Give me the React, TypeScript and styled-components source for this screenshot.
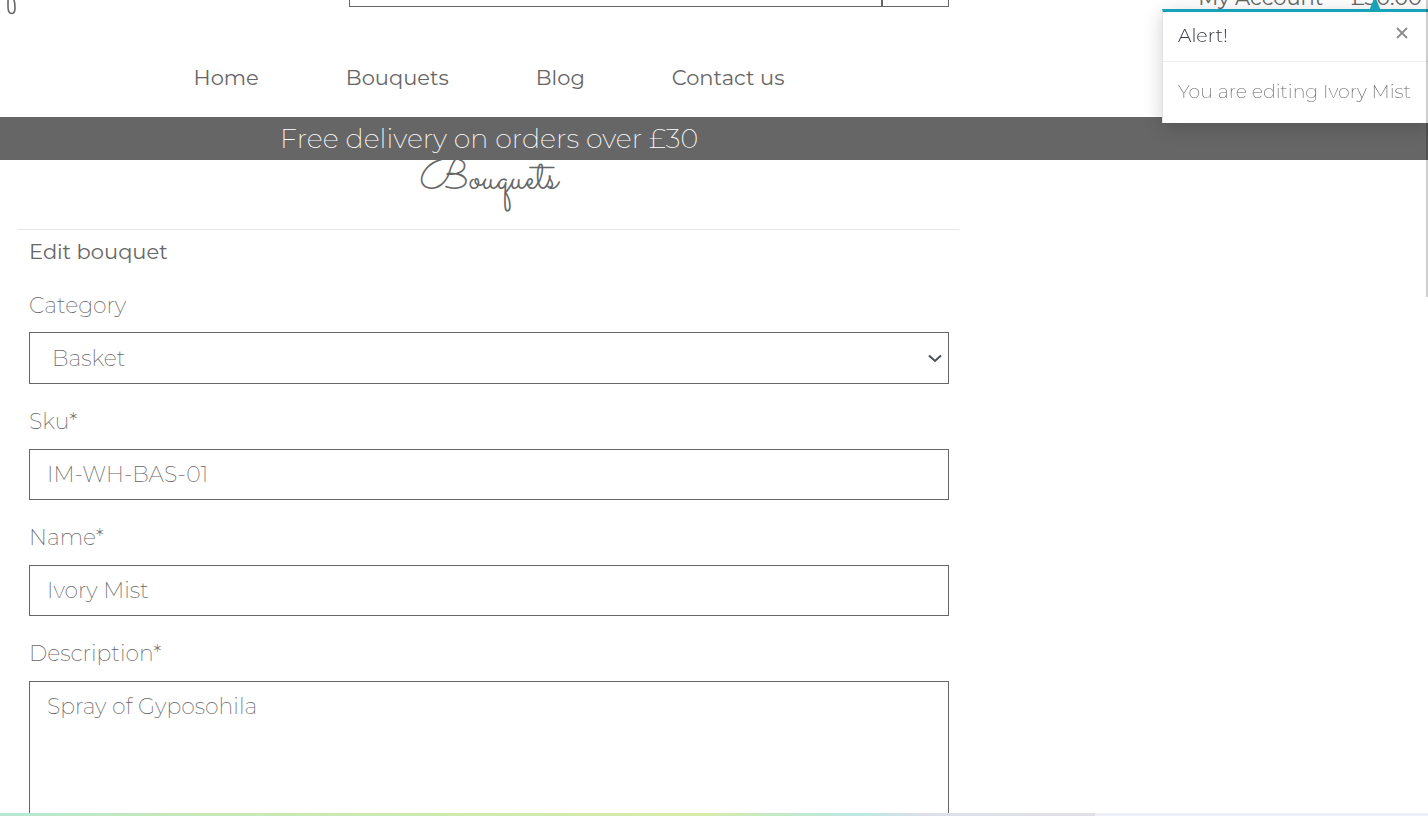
import React from "react";
import styled, { createGlobalStyle } from "styled-components";

const GlobalStyle = createGlobalStyle`
  *, *::before, *::after { box-sizing: border-box; }
  html, body { margin: 0; height: 100%; overflow: hidden; background: #fff; }
  body, input, select, textarea, button {
    font-family: Montserrat, Inter, "Open Sans", sans-serif;
    font-size: 22px;
    font-weight: 200;
    color: #666;
  }
`;

const Page = styled.div`
  height: 100vh;
  overflow: hidden;
`;

const Header = styled.header`
  margin-top: -44px;
`;

const Column = styled.div`
  width: 100%;
  max-width: 978px;
`;

const TopRow = styled.div`
  display: flex;
  justify-content: space-between;
  align-items: flex-end;
  height: 60px;
  padding-right: 6px;
`;

const Brand = styled.a`
  display: flex;
  flex: 0 0 349px;
  padding-left: 6px;
`;

const SearchForm = styled.form`
  display: flex;
  flex: 0 1 600px;
  height: 51px;
  align-self: flex-start;
`;

const SearchInput = styled.input`
  flex: 1;
  min-width: 0;
  border: 1px solid #666;
  border-radius: 0;
  background: #fff;
`;

const SearchButton = styled.button`
  width: 67px;
  border: 1px solid #666;
  background: #fff;
`;

const AccountLinks = styled.nav`
  display: flex;
  gap: 28px;
  margin-left: auto;
  align-self: flex-start;
  padding-top: 25px;
`;

const HeaderLink = styled.a`
  color: #666;
  font-size: 21px;
  font-weight: 400;
  line-height: 34px;
  text-decoration: none;
`;

const MainNav = styled(Column).attrs({ as: "nav" })`
  display: flex;
  justify-content: center;
  gap: 87px;
  height: 101px;
  padding-top: 45px;
`;

const Banner = styled.div`
  background: #666;
`;

const BannerText = styled(Column)`
  color: #fff;
  font-size: 27px;
  font-weight: 200;
  line-height: 43px;
  text-align: center;
`;

const Main = styled(Column).attrs({ as: "main" })`
  padding: 0 19px 0 18px;
`;

const Title = styled.h1`
  margin: 0;
  height: 69px;
  font-family: Sacramento, Lato, cursive;
  font-size: 43px;
  font-weight: 400;
  line-height: 40px;
  text-align: center;
`;

const EditForm = styled.form`
  padding: 5px 10px 0 11px;
  border-top: 1px solid #e5e5e5;
`;

const FormTitle = styled.h2`
  margin: 0 0 21px;
  font-size: 21px;
  font-weight: 400;
  line-height: 33px;
`;

const Field = styled.div`
  display: flex;
  flex-direction: column;
  margin-bottom: 21px;
`;

const Label = styled.label`
  margin-bottom: 10px;
  line-height: 33px;

  ${Field} + ${Field} & {
    margin-bottom: 11px;
  }
`;

const TextInput = styled.input`
  height: 51px;
  padding: 0 17px;
  border: 1px solid #666;
  border-radius: 0;
  outline: 0;
`;

const SelectWrap = styled.div`
  display: grid;
  align-items: center;
  > * { grid-area: 1 / 1; }
  > svg { justify-self: end; margin-right: 7px; pointer-events: none; }
`;

const Select = styled.select`
  width: 100%;
  height: 52px;
  padding: 0 48px 0 22px;
  border: 1px solid #666;
  border-radius: 0;
  background: #fff;
  appearance: none;
`;

const TextArea = styled.textarea`
  height: 220px;
  padding: 8px 17px;
  border: 1px solid #666;
  border-radius: 0;
  line-height: 33px;
  resize: none;
`;

const Toast = styled.section`
  position: fixed;
  top: 9px;
  right: 0;
  width: 266px;
  border-left: 1px solid #e2e2e2;
  border-top: 3px solid #17a2b8;
  background: #fff;
  box-shadow: 0 4px 18px rgba(0, 0, 0, 0.18);
`;

const ToastArrow = styled.svg`
  position: absolute;
  top: -15px;
  right: 47px;
`;

const ToastHeader = styled.div`
  display: flex;
  justify-content: space-between;
  height: 50px;
  padding: 7px 18px 0 15px;
  border-bottom: 1px solid #eee;
`;

const ToastTitle = styled.strong`
  color: #343a40;
  font-size: 19px;
  font-weight: 300;
  line-height: 33px;
`;

const CloseButton = styled.button`
  display: flex;
  align-self: flex-start;
  padding: 8px 2px;
  border: 0;
  background: none;
`;

const ToastBody = styled.p`
  margin: 0;
  height: 61px;
  padding: 13px 15px;
  font-size: 19px;
  line-height: 33px;
  white-space: nowrap;
`;

const ScrollThumb = styled.div`
  position: fixed;
  top: 0;
  right: 0;
  width: 2px;
  height: 297px;
  background: rgba(0, 0, 0, 0.2);
`;

const BottomStrip = styled.div`
  position: fixed;
  right: 0;
  bottom: 0;
  left: 0;
  height: 3px;
  background: linear-gradient(90deg, #b5e8d5 0%, #c6e8b8 12%, #cdeaae 30%, #d9eba8 49%, #c5eac4 54%, #bce8e2 60%, #dedfe8 65%, #e0dfe8 76.7%, #efeff7 76.7%);
`;

export default function App() {
  return (
    <Page>
      <GlobalStyle />
      <Header>
        <TopRow>
          <Brand href="#" aria-label="Shop home">
            <svg width="12" height="36" viewBox="0 0 12 36" fill="none" stroke="#666" strokeWidth="1.6">
              <path d="M2 0V26Q2 33.500 5.500 33.500Q9 33.500 9 28Q9 22 7 16" />
            </svg>
          </Brand>
          <SearchForm>
            <SearchInput aria-label="Search" />
            <SearchButton type="button" aria-label="Submit search" />
          </SearchForm>
          <AccountLinks>
            <HeaderLink href="#">My Account</HeaderLink>
            <HeaderLink href="#">£30.00</HeaderLink>
          </AccountLinks>
        </TopRow>
        <MainNav>
          <HeaderLink href="#">Home</HeaderLink>
          <HeaderLink href="#">Bouquets</HeaderLink>
          <HeaderLink href="#">Blog</HeaderLink>
          <HeaderLink href="#">Contact us</HeaderLink>
        </MainNav>
      </Header>
      <Banner>
        <BannerText>Free delivery on orders over £30</BannerText>
      </Banner>
      <Main>
        <Title>Bouquets</Title>
        <EditForm>
          <FormTitle>Edit bouquet</FormTitle>
          <Field>
            <Label htmlFor="category">Category</Label>
            <SelectWrap>
              <Select id="category" defaultValue="Basket">
                <option>Basket</option>
              </Select>
              <svg width="14" height="10" viewBox="0 0 14 10" fill="none" stroke="#495057" strokeWidth="2">
                <path d="M1 2.500L7 8L13 2.500" />
              </svg>
            </SelectWrap>
          </Field>
          <Field>
            <Label htmlFor="sku">Sku*</Label>
            <TextInput id="sku" defaultValue="IM-WH-BAS-01" />
          </Field>
          <Field>
            <Label htmlFor="name">Name*</Label>
            <TextInput id="name" defaultValue="Ivory Mist" />
          </Field>
          <Field>
            <Label htmlFor="description">Description*</Label>
            <TextArea id="description" defaultValue="Spray of Gyposohila" />
          </Field>
        </EditForm>
      </Main>
      <Toast role="alert">
        <ToastArrow width="12" height="14" viewBox="0 0 12 14">
          <path d="M6 -1L12 14H0Z" fill="#17a2b8" />
        </ToastArrow>
        <ToastHeader>
          <ToastTitle>Alert!</ToastTitle>
          <CloseButton type="button" aria-label="Close">
            <svg width="12" height="12" viewBox="0 0 12 12" stroke="#8c8c8c" strokeWidth="1.8">
              <path d="M1 1L11 11M11 1L1 11" />
            </svg>
          </CloseButton>
        </ToastHeader>
        <ToastBody>You are editing Ivory Mist</ToastBody>
      </Toast>
      <ScrollThumb />
      <BottomStrip />
    </Page>
  );
}
